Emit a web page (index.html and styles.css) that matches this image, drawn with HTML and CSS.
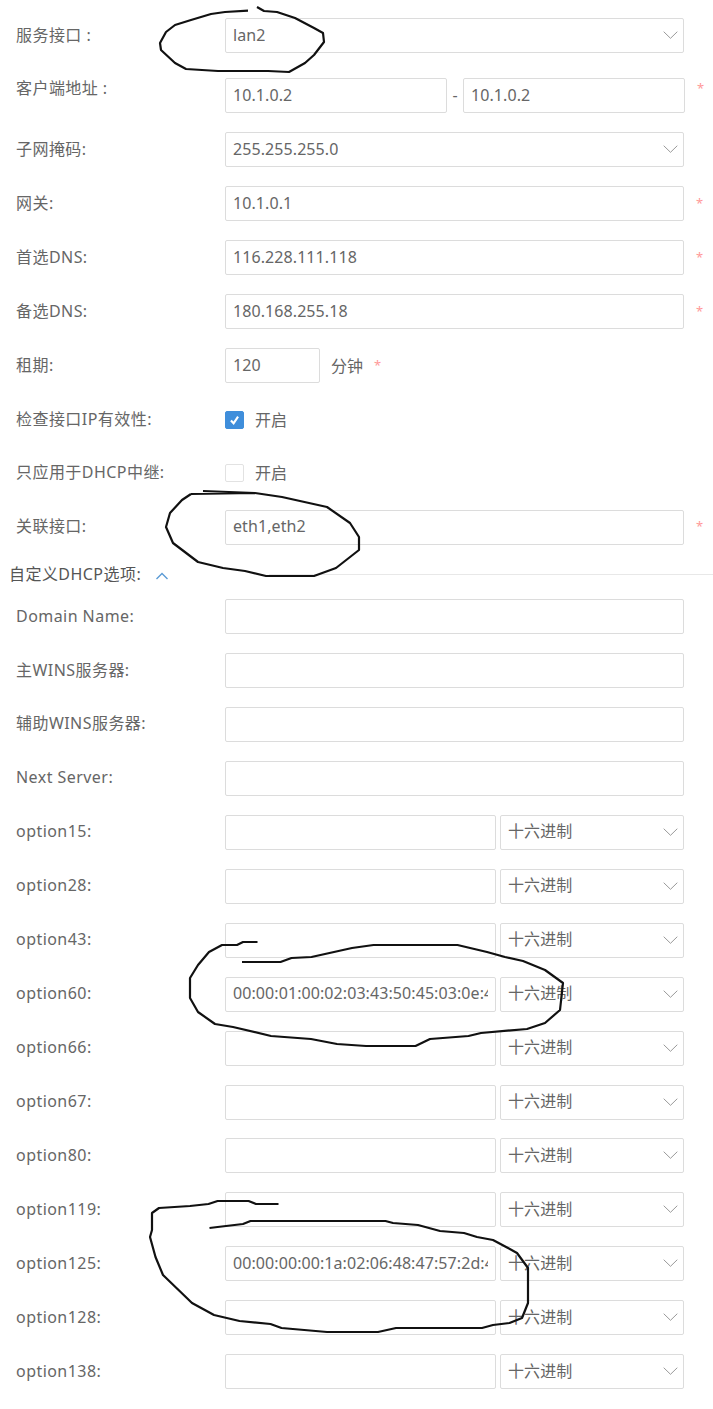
FILE: index.html
```html
<!DOCTYPE html>
<html lang="zh">
<head>
<meta charset="utf-8">
<title>DHCP</title>
<link rel="stylesheet" href="styles.css">
</head>
<body>
<svg width="0" height="0" class="defs"><defs><symbol id="chev" viewBox="0 0 15 8"><path d="M.7.7l6.800 6.600 6.800-6.600" fill="none" stroke="#999" stroke-width="1"/></symbol></defs></svg>
<form class="form">
  <div class="row first"><div class="label">服务接口 :</div><div class="field sel"><span class="val">lan2</span><svg class="chev"><use href="#chev"/></svg></div></div>
  <div class="row"><div class="label lift">客户端地址 :</div><div class="field half"><span class="val">10.1.0.2</span></div><span class="dash">-</span><div class="field half"><span class="val">10.1.0.2</span></div><span class="star lift">*</span></div>
  <div class="row"><div class="label">子网掩码:</div><div class="field sel"><span class="val">255.255.255.0</span><svg class="chev"><use href="#chev"/></svg></div></div>
  <div class="row"><div class="label">网关:</div><div class="field"><span class="val">10.1.0.1</span></div><span class="star">*</span></div>
  <div class="row"><div class="label">首选DNS:</div><div class="field"><span class="val">116.228.111.118</span></div><span class="star">*</span></div>
  <div class="row"><div class="label">备选DNS:</div><div class="field"><span class="val">180.168.255.18</span></div><span class="star">*</span></div>
  <div class="row"><div class="label">租期:</div><div class="field short"><span class="val">120</span></div><span class="unit">分钟</span><span class="star inline">*</span></div>
  <div class="row"><div class="label">检查接口IP有效性:</div><span class="check on"><svg viewBox="0 0 18 18"><path d="M5 9.500l3 3.200 5-7.400" fill="none" stroke="#fff" stroke-width="2.400"/></svg></span><span class="check-text">开启</span></div>
  <div class="row"><div class="label">只应用于DHCP中继:</div><span class="check"></span><span class="check-text">开启</span></div>
  <div class="row tail"><div class="label">关联接口:</div><div class="field"><span class="val">eth1,eth2</span></div><span class="star">*</span></div>
  <div class="section"><span class="section-title">自定义DHCP选项:</span><svg class="up" viewBox="0 0 14 8"><path d="M1.500 7l5.500-5.500 5.500 5.500" fill="none" stroke="#5b9bd5" stroke-width="1.400"/></svg><span class="rule"></span></div>
  <div class="row"><div class="label">Domain Name:</div><div class="field"></div></div>
  <div class="row"><div class="label">主WINS服务器:</div><div class="field"></div></div>
  <div class="row"><div class="label">辅助WINS服务器:</div><div class="field"></div></div>
  <div class="row"><div class="label">Next Server:</div><div class="field"></div></div>
  <div class="row"><div class="label">option15:</div><div class="field opt"></div><div class="field kind"><span class="val">十六进制</span><svg class="chev"><use href="#chev"/></svg></div></div>
  <div class="row"><div class="label">option28:</div><div class="field opt"></div><div class="field kind"><span class="val">十六进制</span><svg class="chev"><use href="#chev"/></svg></div></div>
  <div class="row"><div class="label">option43:</div><div class="field opt"></div><div class="field kind"><span class="val">十六进制</span><svg class="chev"><use href="#chev"/></svg></div></div>
  <div class="row"><div class="label">option60:</div><div class="field opt"><span class="val">00:00:01:00:02:03:43:50:45:03:0e:4</span></div><div class="field kind"><span class="val">十六进制</span><svg class="chev"><use href="#chev"/></svg></div></div>
  <div class="row"><div class="label">option66:</div><div class="field opt"></div><div class="field kind"><span class="val">十六进制</span><svg class="chev"><use href="#chev"/></svg></div></div>
  <div class="row"><div class="label">option67:</div><div class="field opt"></div><div class="field kind"><span class="val">十六进制</span><svg class="chev"><use href="#chev"/></svg></div></div>
  <div class="row"><div class="label">option80:</div><div class="field opt"></div><div class="field kind"><span class="val">十六进制</span><svg class="chev"><use href="#chev"/></svg></div></div>
  <div class="row"><div class="label">option119:</div><div class="field opt"></div><div class="field kind"><span class="val">十六进制</span><svg class="chev"><use href="#chev"/></svg></div></div>
  <div class="row"><div class="label">option125:</div><div class="field opt"><span class="val">00:00:00:00:1a:02:06:48:47:57:2d:4</span></div><div class="field kind"><span class="val">十六进制</span><svg class="chev"><use href="#chev"/></svg></div></div>
  <div class="row"><div class="label">option128:</div><div class="field opt"></div><div class="field kind"><span class="val">十六进制</span><svg class="chev"><use href="#chev"/></svg></div></div>
  <div class="row"><div class="label">option138:</div><div class="field opt"></div><div class="field kind"><span class="val">十六进制</span><svg class="chev"><use href="#chev"/></svg></div></div>
</form>
<svg class="ink" viewBox="0 0 713 1409">
  <path d="M248 10.700L225 12 211 14 191 20 175 25 166 32 160 43 161 50 175 63 186 69 218 71 268 71 289 72 305 63 314 55 324 42 323 33 314 28 295 18 277 12 264 11 257 7"/>
  <path d="M203 491L255 493M191 494L255 493 282 497 327 507 350 523 359 537 359 550 336 568 314 576 266 576 245 571 223 568 198 562 173 543 166 527 170 513 182 500 191 494"/>
  <path d="M257.500 942L243 942 237 945 222 945 209 952 198 965 190 978 190 998 198 1012 215 1024 233 1027 271 1036 311 1039 337 1044 366 1046 415.500 1046 430 1039 468.500 1036 481 1033 527 1029 545 1023 560 1010 563 983 545 970 523 961 505 957 487 952 457.500 945 373.500 945 352 948 311.500 957 291.500 958 280.500 962 242 962"/>
  <path d="M278.500 1204L256 1204 248.600 1201 217.600 1201 208.500 1204 190 1206 159 1208 152 1213 152 1230 150 1237 155.500 1257 163 1275 192 1303 214 1315 239.500 1321 270.500 1324 281.500 1328 327 1332 378 1332 396 1328 482 1328 493 1325 509.500 1323 522 1318 528 1303 528 1268 517 1253 508 1248 493 1240 477 1237 464 1233 440 1231 418 1225 393 1223 385.500 1221 250.500 1221 243 1224 217.600 1227 209.500 1228"/>
</svg>
</body>
</html>
```
FILE: styles.css
```css
* { box-sizing: border-box; }
html, body { margin: 0; padding: 0; background: #fff; }
body {
  position: relative;
  width: 713px;
  height: 1409px;
  overflow: hidden;
  font-family: "Noto Sans", "Noto Sans CJK SC", sans-serif;
  font-size: 16px;
  color: #666;
}
.defs { position: absolute; }
.form { display: block; padding-top: 18px; }
.row {
  display: flex;
  align-items: center;
  height: 35px;
  margin-bottom: 18.95px;
}
.row.first { margin-bottom: 25.4px; }
.row.tail { margin-bottom: 18.2px; }
.label {
  flex: none;
  width: 225px;
  padding: 0 0 2px 16px;
  white-space: nowrap;
  line-height: 22px;
  letter-spacing: .45px;
}
.lift { position: relative; top: -7px; }
.field {
  position: relative;
  flex: none;
  display: flex;
  align-items: center;
  width: 459px;
  height: 35px;
  padding: 0 7px;
  background: #fff;
  border: 1px solid #dcdcdc;
  border-radius: 2px;
  overflow: hidden;
}
.val { white-space: nowrap; overflow: hidden; line-height: 22px; padding-bottom: 2px; letter-spacing: .08px; }
.half { width: 222px; }
.short { width: 95px; }
.opt { width: 271px; }
.kind { width: 184px; margin-left: 4px; }
.chev {
  position: absolute;
  right: 5px;
  top: 12px;
  width: 15px;
  height: 8px;
}
.dash { flex: none; width: 16px; text-align: center; padding-bottom: 2px; }
.star {
  flex: none;
  margin-left: 12px;
  padding-bottom: 2px;
  color: #f99;
  font-size: 13px;
  line-height: 14px;
}
.star.inline { margin-left: 11px; }
.unit { flex: none; margin-left: 11px; padding-bottom: 2px; }
.check {
  flex: none;
  width: 19px;
  height: 18px;
  background: #fff;
  border: 1px solid #e2e2e2;
  border-radius: 2px;
}
.check.on { background: #3f8edb; border-color: #3f8edb; padding: 0; }
.check svg { display: block; width: 17px; height: 16px; }
.check-text { flex: none; margin-left: 11px; padding-bottom: 2px; }
.section {
  display: flex;
  align-items: center;
  height: 25px;
  margin-bottom: 11px;
  padding-left: 9px;
  color: #555;
}
.section-title { flex: none; line-height: 22px; padding-bottom: 4px; letter-spacing: .45px; }
.up { flex: none; width: 14px; height: 8px; margin-left: 14px; }
.rule { flex: 1; height: 1px; margin-left: 100px; background: #e8e8e8; position: relative; top: -1px; }
.ink {
  position: absolute;
  left: 0;
  top: 0;
  width: 713px;
  height: 1409px;
  fill: none;
  stroke: #111;
  stroke-width: 2.2;
  stroke-linejoin: round;
  pointer-events: none;
}
```
